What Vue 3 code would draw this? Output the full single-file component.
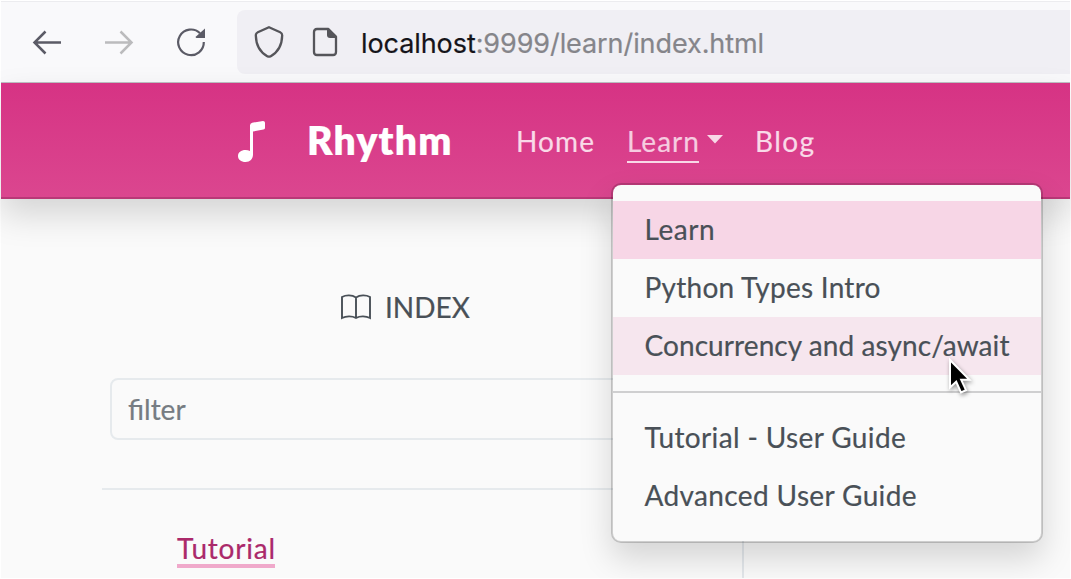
<script setup>
const primary = [
  { label: 'Learn', state: 'active', fit: 'short' },
  { label: 'Python Types Intro', state: '', fit: 'medium' },
  { label: 'Concurrency and async/await', state: 'hover', fit: 'long' },
]
const secondary = ['Tutorial - User Guide', 'Advanced User Guide']
</script>

<template>
  <div class="window">
    <div class="toolbar">
      <svg class="nav-icons" width="236" height="80" viewBox="0 0 236 80" fill="none" stroke-width="2.5">
        <path class="back" d="M60 40.5H33M44.5 29.5L33.5 40.5L44.5 51.5" />
        <path class="forward" d="M104 40.5H131M119.500 29.500L130.500 40.500L119.500 51.500" />
        <path class="reload" d="M199 31.200A12.800 12.800 0 1 0 202.800 40" stroke-width="2.200" />
        <path class="reload-tip" d="M204 26.500V36H195.500Q194 35.500 195 34.500Z" />
      </svg>
      <div class="address">
        <svg class="shield" width="32" height="34" viewBox="0 0 32 34">
          <path d="M16 2.300L27.200 7.200Q29.200 8.100 29.200 10.300C29 20 24.800 27.500 17.400 31.400Q16 32 14.600 31.400C7.200 27.500 3 20 2.800 10.300Q2.800 8.100 4.800 7.200Z" />
        </svg>
        <svg class="file" width="26" height="30" viewBox="0 0 26 30">
          <path d="M16 2H5Q2 2 2 5V25Q2 28 5 28H21Q24 28 24 25V10Z" />
          <path class="fold" d="M15 1.200H17L24.800 9V11H18Q15 11 15 8Z" />
        </svg>
        <span class="url"><b>localhost</b>:9999/learn/index.html</span>
      </div>
    </div>

    <header class="navbar">
      <svg class="note" width="28" height="42" viewBox="0 0 28 42">
        <path d="M12 4.500Q12 2.200 14.200 1.700L25 0Q27 0 27 1.800V7Q27 8.300 25.500 8.600L15 10.500V33.500C15 38 12 41 7.600 41C3 41 0 38.500 0 35C0 31.500 3 29 7.500 29Q10 29 12 30Z" />
      </svg>
      <span class="brand">Rhythm</span>
      <nav class="links">
        <a class="home">Home</a>
        <div class="dropdown">
          <a class="current">Learn</a>
          <svg class="caret" width="16" height="9" viewBox="0 0 16 9"><path d="M0 0H16L8 8.400Z" /></svg>
          <div class="menu">
            <div v-for="item in primary" :key="item.label" class="item" :class="[item.state, item.fit]">
              {{ item.label }}
            </div>
            <div class="divider"></div>
            <div v-for="label in secondary" :key="label" class="item guide">{{ label }}</div>
            <svg class="pointer" width="28" height="40" viewBox="0 0 28 40">
              <path d="M3 3V30.500L9.200 24.800L14 35.500L19 33.200L14.200 22.800H22.500Z" />
            </svg>
          </div>
        </div>
        <a class="blog">Blog</a>
      </nav>
    </header>

    <div class="body">
      <aside class="sidebar">
        <div class="index">
          <svg width="32" height="28" viewBox="0 0 32 28">
            <path d="M16 4.500C12 1.800 6 1.800 2 4V25C6 23 12 22.800 16 25C20 22.800 26 23 30 25V4C26 1.800 20 1.800 16 4.500ZM16 4.500V25" />
          </svg>
          <span>INDEX</span>
        </div>
        <div class="filter"><span>filter</span></div>
        <div class="rule"></div>
        <div class="entry"><a>Tutorial</a></div>
      </aside>
    </div>
  </div>
</template>

<style>
body { background: #fff; overflow: hidden; }
</style>

<style scoped>
.window { box-sizing: border-box; width: 1071px; height: 579px; padding: 1px; overflow: hidden; display: flex; flex-direction: column; font-family: Lato, "Noto Sans", sans-serif; font-size: 28px; color: #495057; -webkit-text-stroke: 0.2px currentColor; }
.toolbar { box-sizing: border-box; flex: none; height: 82px; display: flex; background: #f9f9fb; border-top: 1px solid #ececef; border-bottom: 1px solid #bfc0c4; }
.nav-icons { flex: none; }
.back, .reload { stroke: #5b5b66; }
.reload-tip { fill: #5b5b66; }
.forward { stroke: #bbbbbd; }
.address { flex: 1; height: 64px; margin-top: 8px; display: flex; align-items: center; background: #f0eff4; border-radius: 8px 0 0 8px; }
.shield { margin-left: 16px; }
.shield path, .file path { fill: none; stroke: #55555a; stroke-width: 2.300px; }
.file { margin-left: 27px; }
.file .fold { fill: #55555a; stroke: none; }
.url { margin-left: 23px; margin-top: 3px; font-family: Inter, sans-serif; font-size: 27px; letter-spacing: -0.08px; color: #85858a; white-space: pre; }
.url b { font-weight: 400; color: #15141a; }
.navbar { position: relative; z-index: 2; box-sizing: border-box; flex: none; height: 116px; display: flex; align-items: center; background: linear-gradient(#d63384, #db468f); border-bottom: 2px solid #b93877; box-shadow: 0 16px 32px rgba(0,0,0,.15); color: #fff; }
.note { margin-left: 237px; margin-top: 3px; fill: #fff; }
.brand { width: 145px; margin-left: 41px; font-size: 39px; font-weight: 800; line-height: 46px; letter-spacing: 1.2px; white-space: nowrap; }
.links { display: flex; margin-top: 4px; color: #f9dae8; line-height: 40px; }
.home { margin-left: 64px; width: 79px; letter-spacing: 1.1px; }
.dropdown { position: relative; display: flex; margin-left: 32px; width: 97px; }
.current { box-sizing: border-box; width: 72px; height: 42px; border-bottom: 2px solid #f8d8e7; color: #f6cce0; letter-spacing: 1px; }
.caret { margin: 14px 0 0 8px; fill: #f8d8e7; }
.blog { margin-left: 31px; letter-spacing: 1.4px; }
.menu { position: absolute; left: -16px; top: 62px; box-sizing: border-box; width: 432px; height: 360px; padding: 16px 0; background: #fafafa; background-clip: padding-box; border: 2px solid rgba(0,0,0,.176); border-radius: 10px; box-shadow: 0 16px 32px rgba(0,0,0,.15); color: #495057; }
.item { box-sizing: border-box; height: 58px; line-height: 57px; padding-left: 31.5px; white-space: nowrap; }
.short { letter-spacing: 0.55px; }
.medium { letter-spacing: 0.25px; }
.long { letter-spacing: 0.08px; }
.guide { letter-spacing: 0.37px; }
.active { background: #f7d6e6; }
.hover { background: #f6e6ee; }
.divider { height: 2px; margin: 16px 0; background: #cfcfd0; }
.pointer { position: absolute; left: 334px; top: 172px; fill: #000; stroke: #fff; stroke-width: 2px; filter: drop-shadow(1px 2px 2px rgba(0,0,0,.4)); overflow: visible; }
.body { flex: 1; display: flex; background: #fafafa; }
.sidebar { box-sizing: border-box; width: 743px; padding: 88px 33px 0 101px; border-right: 2px solid #e3e7eb; }
.index { display: flex; align-items: center; justify-content: center; gap: 13px; height: 40px; }
.index svg { fill: none; stroke: #495057; stroke-width: 1.900px; }
.index span { width: 86px; }
.filter { box-sizing: border-box; height: 62px; margin: 51px 8px 0; padding-left: 16px; line-height: 59px; border: 2px solid #e6eaed; border-radius: 8px; color: #767c82; }
.rule { height: 2px; margin-top: 48px; background: #e6eaed; }
.entry { padding: 38px 0 0 75px; }
.entry a { display: block; box-sizing: border-box; width: 98px; height: 40px; line-height: 40px; border-bottom: 4px solid #f0a9cb; color: #ab296a; letter-spacing: 0.8px; white-space: nowrap; }
</style>
